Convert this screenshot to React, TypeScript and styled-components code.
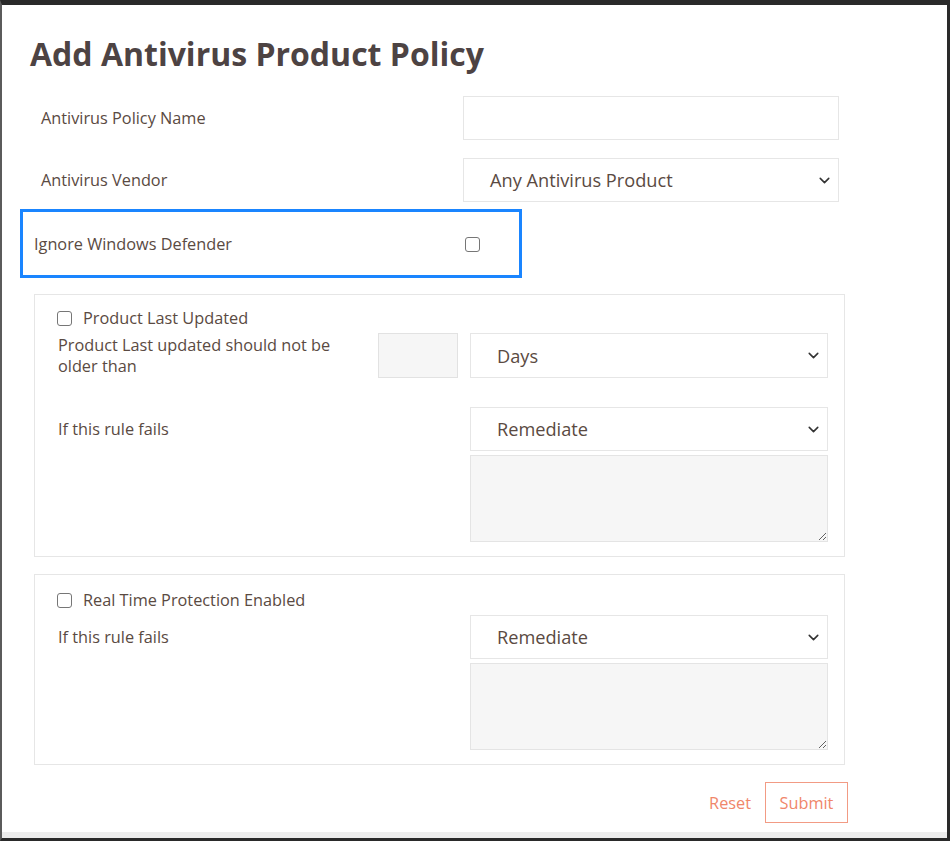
import React from "react";
import styled, { createGlobalStyle } from "styled-components";
import { ChevronDown } from "lucide-react";

const GlobalStyle = createGlobalStyle`
  html, body {
    margin: 0;
    padding: 0;
    background: #ffffff;
  }
  * {
    box-sizing: border-box;
  }
`;

const Frame = styled.div`
  width: 950px;
  height: 841px;
  display: flex;
  flex-direction: column;
  border-top: 5px solid #2a2a2a;
  border-left: 2px solid #5b5b5b;
  border-right: 3px solid #2a2a2a;
  border-bottom: 3px solid #2a2a2a;
  background: #ffffff;
  font-family: "Open Sans", "Noto Sans", sans-serif;
  color: #5a4a42;
  overflow: hidden;
`;

const Body = styled.div`
  flex: 1;
  display: flex;
  flex-direction: column;
  padding-top: 29px;
`;

const BottomStrip = styled.div`
  height: 6px;
  background: #ededed;
`;

const Title = styled.h1`
  margin: 0 0 22px 28px;
  font-size: 32px;
  line-height: 40px;
  font-weight: 700;
  color: #4d4343;
`;

const FieldRow = styled.div`
  display: grid;
  grid-template-columns: 422px 376px;
  align-items: center;
  padding-left: 39px;
  margin-bottom: 18px;
`;

const Label = styled.label`
  font-size: 16.3px;
  line-height: 21px;
  color: #5a4a42;
`;

const TextInput = styled.input`
  height: 44px;
  width: 100%;
  border: 1px solid #e6e6e6;
  background: #ffffff;
  outline: none;
`;

const SmallInput = styled.input`
  height: 45px;
  width: 80px;
  border: 1px solid #e2e2e2;
  background: #f6f6f6;
  outline: none;
`;

const SelectBox = styled.div<{ $height?: number }>`
  height: ${(p) => p.$height ?? 44}px;
  display: flex;
  align-items: center;
  justify-content: space-between;
  padding: 0 5px 0 26px;
  border: 1px solid #e6e6e6;
  background: #ffffff;
  font-size: 18.2px;
  color: #5a4a42;
  svg {
    color: #333333;
  }
`;

const Highlight = styled.div`
  margin: -11px 0 0 18px;
  width: 502px;
  height: 69px;
  border: 3px solid #1a85ff;
  padding: 2px 0 0 11px;
  display: grid;
  grid-template-columns: 431px 16px;
  align-items: center;
`;

const Check = styled.input.attrs({ type: "checkbox" })`
  appearance: none;
  margin: 0;
  width: 15px;
  height: 15px;
  border: 1.5px solid #767676;
  border-radius: 3px;
  background: #ffffff;
`;

const Section = styled.div<{ $gap: number; $top?: number }>`
  margin: ${(p) => p.$gap}px 0 0 32px;
  width: 811px;
  border: 1px solid #e6e6e6;
  padding: ${(p) => p.$top ?? 12}px 16px 14px 22px;
  display: flex;
  flex-direction: column;
`;

const CheckRow = styled.div`
  display: flex;
  align-items: center;
  gap: 11px;
  height: 22px;
  margin-bottom: 4px;
  font-size: 16.3px;
`;

const RuleRow = styled.div<{ $gap?: number }>`
  display: grid;
  grid-template-columns: 308px 80px 358px;
  column-gap: 12px;
  align-items: center;
  margin-top: ${(p) => p.$gap ?? 0}px;
  padding-left: 1px;
`;

const WideLabel = styled(Label)`
  grid-column: 1 / 3;
`;

const Notes = styled.textarea`
  grid-column: 3;
  margin-top: 4px;
  height: 87px;
  border: 1px solid #e4e4e4;
  background: #f6f6f6;
  resize: vertical;
  outline: none;
`;

const Actions = styled.div`
  display: flex;
  justify-content: flex-end;
  align-items: center;
  gap: 14px;
  margin-top: 17px;
  padding-right: 99px;
`;

const TextButton = styled.button`
  border: none;
  background: none;
  padding: 0;
  font-family: inherit;
  font-size: 16.3px;
  color: #f0866a;
`;

const OutlineButton = styled(TextButton)`
  width: 83px;
  height: 41px;
  border: 1px solid #f29b84;
`;

const Select: React.FC<{ value: string; height?: number }> = ({ value, height }) => (
  <SelectBox $height={height}>
    <span>{value}</span>
    <ChevronDown size={17} strokeWidth={2.2} />
  </SelectBox>
);

export default function App() {
  return (
    <Frame>
      <GlobalStyle />
      <Body>
        <Title>Add Antivirus Product Policy</Title>

        <FieldRow>
          <Label>Antivirus Policy Name</Label>
          <TextInput />
        </FieldRow>
        <FieldRow>
          <Label>Antivirus Vendor</Label>
          <Select value="Any Antivirus Product" />
        </FieldRow>

        <Highlight>
          <Label>Ignore Windows Defender</Label>
          <Check />
        </Highlight>

        <Section $gap={16}>
          <CheckRow>
            <Check />
            <span>Product Last Updated</span>
          </CheckRow>
          <RuleRow>
            <Label>Product Last updated should not be older than</Label>
            <SmallInput />
            <Select value="Days" height={45} />
          </RuleRow>
          <RuleRow $gap={29}>
            <WideLabel>If this rule fails</WideLabel>
            <Select value="Remediate" />
            <Notes />
          </RuleRow>
        </Section>

        <Section $gap={17} $top={14}>
          <CheckRow>
            <Check />
            <span>Real Time Protection Enabled</span>
          </CheckRow>
          <RuleRow>
            <WideLabel>If this rule fails</WideLabel>
            <Select value="Remediate" />
            <Notes />
          </RuleRow>
        </Section>

        <Actions>
          <TextButton>Reset</TextButton>
          <OutlineButton>Submit</OutlineButton>
        </Actions>
      </Body>
      <BottomStrip />
    </Frame>
  );
}
